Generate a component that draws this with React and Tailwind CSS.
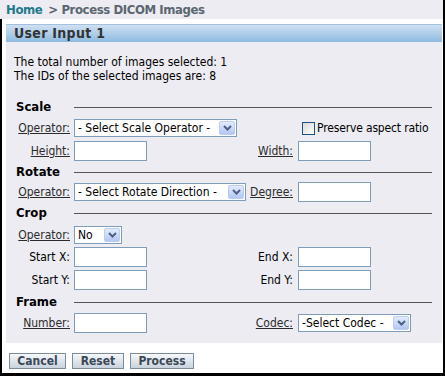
const font = "font-['DejaVu_Sans_Condensed','Liberation_Sans',sans-serif]";

function Arrow() {
  return (
    <div className="w-[16px] h-[14px] mr-px rounded-[2px] border border-[#b9cdf5] bg-linear-to-b from-[#e3ebfd] to-[#b3c7f4] flex items-center justify-center">
      <svg width="9" height="6" viewBox="0 0 9 6">
        <path d="M1 1 L4.5 4.5 L8 1" fill="none" stroke="#4d6185" strokeWidth="2" />
      </svg>
    </div>
  );
}

function Select({ width, text }) {
  return (
    <div className={`${width} h-[18px] flex items-center justify-between border border-[#7f9db9] bg-white`}>
      <span className="pl-[3px] text-[12px] text-black whitespace-nowrap">{text}</span>
      <Arrow />
    </div>
  );
}

function Field() {
  return <input type="text" className="w-[73px] h-[20px] border border-[#7f9db9] bg-white outline-none" />;
}

function Label({ children, link }) {
  return (
    <span className={link ? 'underline text-[#2b2b2b]' : 'text-black'}>{children}</span>
  );
}

function Row({ h, label, field, rlabel, rfield, rlink, link = true }) {
  return (
    <div className={`${h} flex items-center text-[12px]`}>
      <div className="w-[68px] pr-[4px] text-right">{label && <Label link={link}>{label}</Label>}</div>
      <div className="w-[176px]">{field}</div>
      <div className="w-[48px] pr-[5px] text-right whitespace-nowrap">{rlabel && <Label link={rlink}>{rlabel}</Label>}</div>
      <div>{rfield}</div>
    </div>
  );
}

function Heading({ h, children }) {
  return (
    <div className={`${h} flex items-center`}>
      <div className="w-[68px] pl-[10px] text-[13px] font-bold text-black">{children}</div>
      <div className="flex-1 mr-[10px] h-px bg-[#555]" />
    </div>
  );
}

function Button({ width, children }) {
  return (
    <button className={`${width} h-[16px] border border-[#7d8c9b] bg-linear-to-b from-[#f6f8fa] to-[#c9d3dd] text-[12px] font-bold leading-none text-[#3b4856]`}>
      {children}
    </button>
  );
}

export default function App() {
  return (
    <div className={`${font} w-[445px] h-[376px] bg-[#ececf2] border-r-2 border-b-[3px] border-black flex flex-col`}>
      {/* breadcrumb */}
      <div className="h-[19px] pl-[6px] flex items-center text-[13px] font-bold tracking-[-0.4px] whitespace-nowrap">
        <span className="text-[#1f7a8c]">Home</span>
        <span className="text-[#5b6670] ml-[6px]">&gt; Process DICOM Images</span>
      </div>

      <div className="flex-1 flex flex-col bg-white border-l-2 border-black pl-[4px] pr-px pt-[5px]">
        <div className="h-[18px] border-t border-[#a3c0dd] bg-linear-to-b from-[#cfe0f2] to-[#8dbbe0] pl-[8px] flex items-center text-[14px] font-bold tracking-[0.3px] text-[#333]">
          User Input 1
        </div>

        <div className="bg-[#ececf2] pt-[13px] pb-[9px]">
          <div className="pl-[8px] text-[12px] leading-[14px] text-black">
            <div>The total number of images selected: 1</div>
            <div>The IDs of the selected images are: 8</div>
          </div>

          <div className="mt-[14px]">
            <Heading h="h-[20px]">Scale</Heading>
            <Row
              h="h-[22px]"
              label="Operator:"
              field={<Select width="w-[163px]" text="- Select Scale Operator -" />}
              rfield={
                <div className="flex items-center ml-[4px]">
                  <div className="w-[13px] h-[13px] border border-[#1c5180] bg-linear-to-br from-[#d8d8d4] to-white" />
                  <span className="ml-[2px] whitespace-nowrap tracking-[-0.15px] text-black">Preserve aspect ratio</span>
                </div>
              }
            />
            <Row h="h-[23px]" label="Height:" field={<Field />} rlabel="Width:" rlink rfield={<Field />} />

            <Heading h="h-[20px]">Rotate</Heading>
            <Row
              h="h-[20px]"
              label="Operator:"
              field={<Select width="w-[172px]" text="- Select Rotate Direction -" />}
              rlabel="Degree:"
              rlink
              rfield={<Field />}
            />

            <Heading h="h-[22px]">Crop</Heading>
            <Row h="h-[21px]" label="Operator:" field={<Select width="w-[48px]" text="No" />} />
            <Row h="h-[23px]" label="Start X:" link={false} field={<Field />} rlabel="End X:" rfield={<Field />} />
            <Row h="h-[24px]" label="Start Y:" link={false} field={<Field />} rlabel="End Y:" rfield={<Field />} />

            <Heading h="h-[20px]">Frame</Heading>
            <Row
              h="h-[22px]"
              label="Number:"
              field={<Field />}
              rlabel="Codec:"
              rlink
              rfield={<Select width="w-[113px]" text="-Select Codec -" />}
            />
          </div>
        </div>

        <div className="flex gap-[6px] pl-[3px] pt-[10px]">
          <Button width="w-[57px]">Cancel</Button>
          <Button width="w-[52px]">Reset</Button>
          <Button width="w-[64px]">Process</Button>
        </div>
      </div>
    </div>
  );
}
